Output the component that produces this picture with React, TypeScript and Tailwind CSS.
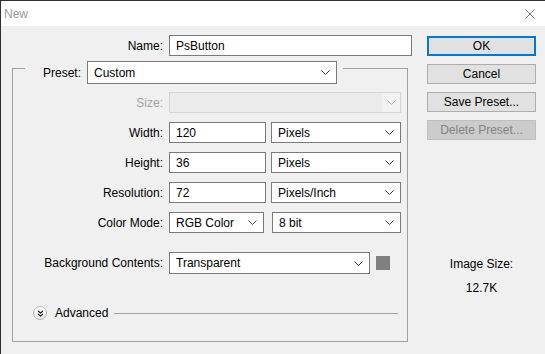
import React from "react";

const Chevron = ({ disabled = false }: { disabled?: boolean }) => (
  <svg width="9" height="5" viewBox="0 0 9 5" className="shrink-0">
    <polyline points="0.5,0.5 4.5,4.5 8.5,0.5" fill="none" stroke={disabled ? "#b4b4b4" : "#3c3c3c"} strokeWidth="1" />
  </svg>
);

function TextBox({ value, className }: { value: string; className: string }) {
  return (
    <div className={["flex h-[21px] items-center border border-[#7a7a7a] bg-white pl-[6px]", className].join(" ")}>
      {value}
    </div>
  );
}

function Select({ value, className, height = "h-[21px]" }: { value: string; className: string; height?: string }) {
  return (
    <div className={["flex items-center justify-between border border-[#7a7a7a] bg-white pl-[6px] pr-[6px]", height, className].join(" ")}>
      <span>{value}</span>
      <Chevron />
    </div>
  );
}

function FieldRow({ label, className = "", muted = false, children }: { label: string; className?: string; muted?: boolean; children: React.ReactNode }) {
  return (
    <div className={["flex items-center", className].join(" ")}>
      <span className={["w-[150px] text-right", muted ? "text-[#a3a3a3]" : ""].join(" ")}>{label}</span>
      <div className="ml-[6px] flex items-center">{children}</div>
    </div>
  );
}

function DialogButton({ label, variant = "normal" }: { label: string; variant?: "default" | "normal" | "disabled" }) {
  return (
    <div
      className={[
        "flex h-[20px] items-center justify-center",
        variant === "default" && "border-2 border-[#0078d7] bg-[#e1e1e1] text-black",
        variant === "normal" && "border border-[#adadad] bg-[#e1e1e1] text-black",
        variant === "disabled" && "border border-[#bfbfbf] bg-[#cccccc] text-[#838383]",
      ]
        .filter(Boolean)
        .join(" ")}
    >
      {label}
    </div>
  );
}

export default function App() {
  return (
    <div className="flex h-[354px] w-[545px] flex-col overflow-hidden border-l border-t border-[#2f2f2f] bg-[#f0f0f0] font-['Liberation_Sans',Arial,sans-serif] text-[12px] leading-[14px] text-black">
      <div className="flex h-[25px] shrink-0 items-center justify-between bg-white pl-[3px] pr-[10px]">
        <span className="text-[#9a9a9a]">New</span>
        <svg width="10" height="10" viewBox="0 0 10 10">
          <path d="M0.5 0.5 L9.5 9.5 M9.5 0.5 L0.5 9.5" stroke="#7a7a7a" strokeWidth="1" fill="none" />
        </svg>
      </div>

      <div className="flex flex-1">
        <div className="w-[426px] shrink-0 pt-[9px]">
          <div className="flex items-center">
            <span className="w-[162px] text-right">Name:</span>
            <TextBox value="PsButton" className="ml-[6px] w-[243px]" />
          </div>

          <div className="ml-[11px] mt-[5px] w-[396px]">
            <div className="flex">
              <div className="mt-[7px] w-[13px] self-stretch border-l border-t border-[#a0a0a0]" />
              <div className="flex items-center">
                <span className="w-[56px] text-right">Preset:</span>
                <Select value="Custom" className="ml-[6px] w-[250px]" height="h-[23px]" />
              </div>
              <div className="ml-[6px] mt-[7px] flex-1 self-stretch border-r border-t border-[#a0a0a0]" />
            </div>

            <div className="border-b border-l border-r border-[#a0a0a0] pb-[21px] pt-[8px]">
              <FieldRow label="Size:" muted>
                <div className="flex h-[21px] w-[232px] items-center justify-end border border-[#d4d4d4] bg-[#ebebeb]">
                  <div className="flex h-full w-[18px] items-center justify-center bg-[#f2f2f2]">
                    <Chevron disabled />
                  </div>
                </div>
              </FieldRow>

              <FieldRow label="Width:" className="mt-[9px]">
                <TextBox value="120" className="w-[97px]" />
                <Select value="Pixels" className="ml-[5px] w-[130px]" />
              </FieldRow>
              <FieldRow label="Height:" className="mt-[9px]">
                <TextBox value="36" className="w-[97px]" />
                <Select value="Pixels" className="ml-[5px] w-[130px]" />
              </FieldRow>
              <FieldRow label="Resolution:" className="mt-[9px]">
                <TextBox value="72" className="w-[97px]" />
                <Select value="Pixels/Inch" className="ml-[5px] w-[130px]" />
              </FieldRow>
              <FieldRow label="Color Mode:" className="mt-[9px]">
                <Select value="RGB Color" className="w-[95px]" />
                <Select value="8 bit" className="ml-[8px] w-[129px]" />
              </FieldRow>
              <FieldRow label="Background Contents:" className="mt-[19px]">
                <Select value="Transparent" className="w-[201px]" height="h-[22px]" />
                <div className="ml-[6px] h-[14px] w-[14px] bg-[#808080]" />
              </FieldRow>

              <div className="mt-[32px] flex items-center pl-[20px] pr-[9px]">
                <div className="flex h-[14px] w-[14px] items-center justify-center rounded-full border border-[#b5b5b5] bg-[linear-gradient(180deg,#ffffff_0%,#e9e9e9_100%)]">
                  <svg width="7" height="7" viewBox="0 0 7 7">
                    <polyline points="1,1 3.5,3 6,1" fill="none" stroke="#222" strokeWidth="1.1" />
                    <polyline points="1,4 3.5,6 6,4" fill="none" stroke="#222" strokeWidth="1.1" />
                  </svg>
                </div>
                <span className="ml-[8px]">Advanced</span>
                <div className="ml-[6px] h-px flex-1 bg-[#a0a0a0]" />
              </div>
            </div>
          </div>
        </div>

        <div className="w-[109px] shrink-0 pt-[10px]">
          <div className="flex flex-col gap-[8px]">
            <DialogButton label="OK" variant="default" />
            <DialogButton label="Cancel" />
            <DialogButton label="Save Preset..." />
            <DialogButton label="Delete Preset..." variant="disabled" />
          </div>
          <p className="mt-[117px] text-center">Image Size:</p>
          <p className="mt-[10px] text-center">12.7K</p>
        </div>
      </div>
    </div>
  );
}
